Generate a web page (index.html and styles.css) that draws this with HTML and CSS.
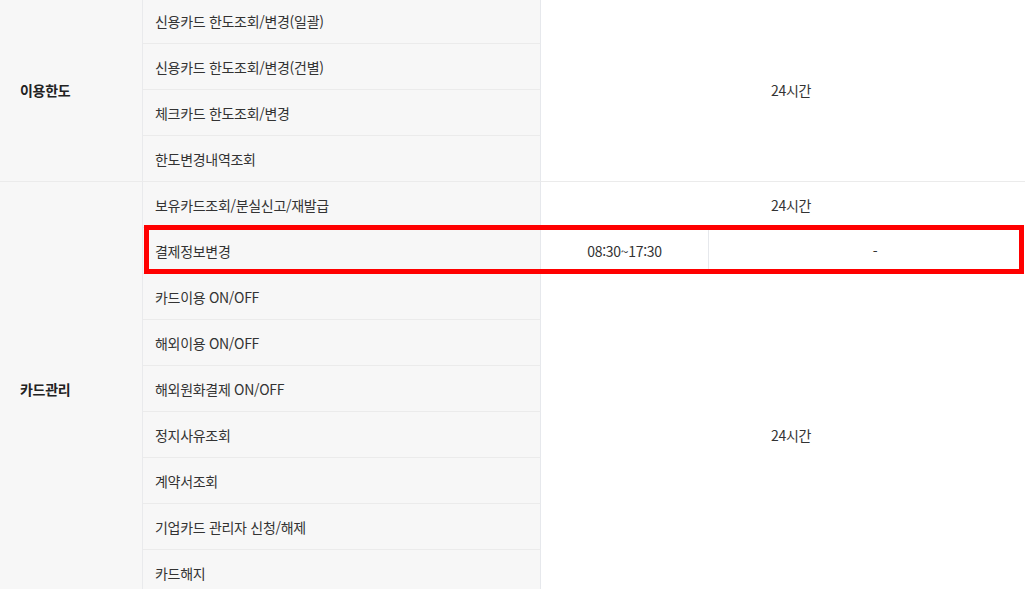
FILE: index.html
```html
<!DOCTYPE html>
<html lang="ko">
<head>
<meta charset="utf-8">
<link rel="stylesheet" href="styles.css">
</head>
<body>
<div class="wrap">
<table class="svc">
  <colgroup>
    <col class="c1"><col class="c2"><col class="c3"><col class="c4">
  </colgroup>
  <tbody>
    <tr>
      <th rowspan="4" class="grp grp-end">이용한도</th>
      <td class="name">신용카드 한도조회/변경(일괄)</td>
      <td rowspan="4" colspan="2" class="time grp-end">24시간</td>
    </tr>
    <tr><td class="name">신용카드 한도조회/변경(건별)</td></tr>
    <tr><td class="name">체크카드 한도조회/변경</td></tr>
    <tr><td class="name grp-end">한도변경내역조회</td></tr>
    <tr>
      <th rowspan="9" class="grp">카드관리</th>
      <td class="name">보유카드조회/분실신고/재발급</td>
      <td colspan="2" class="time">24시간</td>
    </tr>
    <tr>
      <td class="name">결제정보변경</td>
      <td class="time split">08:30~17:30</td>
      <td class="time">-</td>
    </tr>
    <tr>
      <td class="name">카드이용 ON/OFF</td>
      <td rowspan="7" colspan="2" class="time">24시간</td>
    </tr>
    <tr><td class="name">해외이용 ON/OFF</td></tr>
    <tr><td class="name">해외원화결제 ON/OFF</td></tr>
    <tr><td class="name">정지사유조회</td></tr>
    <tr><td class="name">계약서조회</td></tr>
    <tr><td class="name">기업카드 관리자 신청/해제</td></tr>
    <tr><td class="name">카드해지</td></tr>
  </tbody>
</table>
<div class="highlight"></div>
</div>
</body>
</html>
```
FILE: styles.css
```css
html, body {
  margin: 0;
  padding: 0;
  background: #ffffff;
  overflow: hidden;
}
.wrap {
  position: relative;
  width: 1025px;
  height: 589px;
  overflow: hidden;
}
.svc {
  margin-top: -2px;
  width: 1041px;
  table-layout: fixed;
  border-collapse: separate;
  border-spacing: 0;
  font-family: "Noto Sans CJK KR", "Noto Sans", sans-serif;
  font-size: 14px;
  line-height: 20px;
  color: #333333;
  letter-spacing: -0.3px;
}
.c1 { width: 143px; }
.c2 { width: 398px; }
.c3 { width: 168px; }
.c4 { width: auto; }
.svc th, .svc td {
  height: 45px;
  padding: 0;
  box-sizing: border-box;
  vertical-align: middle;
  font-weight: normal;
}
.svc tr { height: 46px; }
.grp {
  background: #f7f7f7;
  border-right: 1px solid #e9eaec;
  text-align: left;
  padding-left: 20px !important;
  font-weight: 700 !important;
  color: #222222;
}
.name {
  background: #f7f7f7;
  border-right: 1px solid #e6e8ec;
  border-bottom: 1px solid #ebebeb;
  padding-left: 12px !important;
  padding-top: 1px !important;
  text-align: left;
}
.time {
  background: #ffffff;
  text-align: center;
}
.split {
  border-right: 1px solid #e6e8ec;
}
.grp-end {
  border-bottom: 1px solid #ebebeb;
}
.highlight {
  position: absolute;
  left: 144px;
  top: 225px;
  width: 880px;
  height: 49px;
  box-sizing: border-box;
  border: 5px solid #ff0000;
  pointer-events: none;
}
```
